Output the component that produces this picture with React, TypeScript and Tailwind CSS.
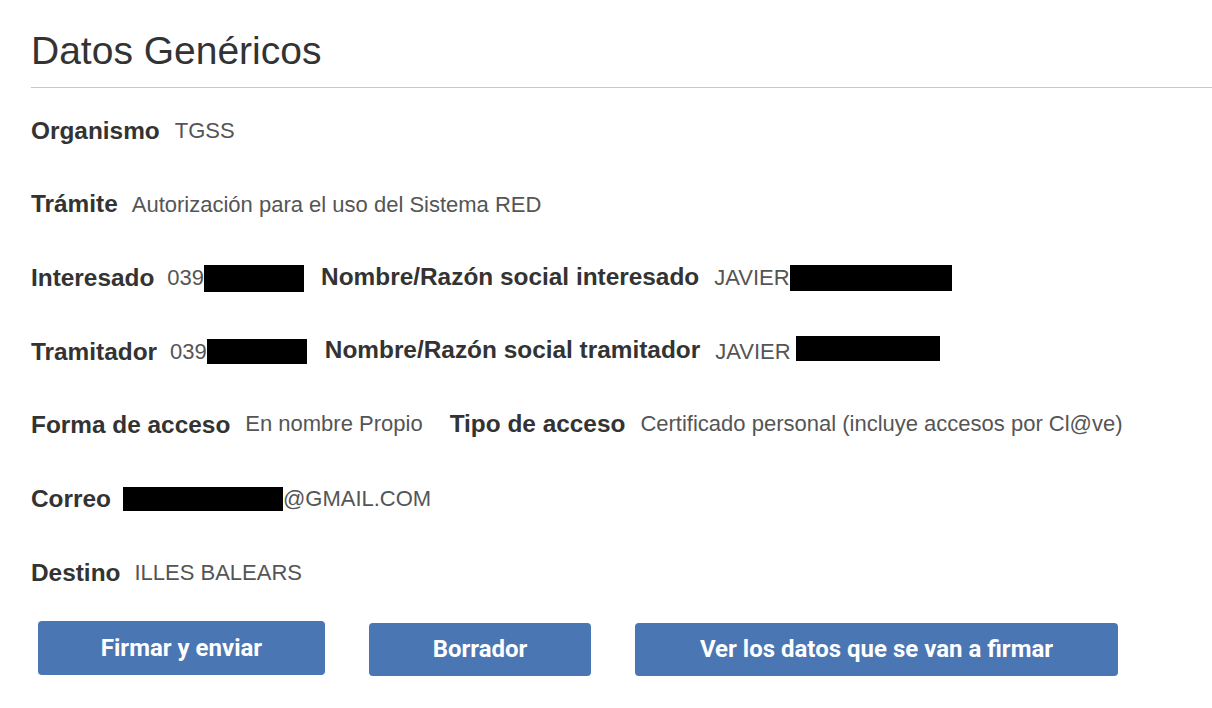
import React from "react";

const Label = ({ children }: { children: React.ReactNode }) => (
  <span className="font-bold text-[24.4px] text-[#333333] leading-none">{children}</span>
);
const Value = ({ children }: { children: React.ReactNode }) => (
  <span className="text-[22px] text-[#555555] leading-none">{children}</span>
);
const Black = ({ w, h }: { w: string; h: string }) => <span className={`inline-block bg-black ${w} ${h}`} />;

export default function App() {
  return (
    <div className="w-[1212px] h-[708px] bg-white overflow-hidden" style={{ fontFamily: '"Liberation Sans", Arial, sans-serif' }}>
      <div className="pl-[31px] pt-[27px]">
        <h1 className="text-[39px] leading-[48px] text-[#333333] font-normal">Datos Genéricos</h1>
        <div className="mt-[12px] h-px bg-[#c8c8c8]" />
        <div className="mt-[6px] flex flex-col">
          <div className="h-[73.7px] flex items-center gap-[15px]">
            <Label>Organismo</Label>
            <Value>TGSS</Value>
          </div>
          <div className="h-[73.7px] flex items-center gap-[14px]">
            <Label>Trámite</Label>
            <Value>Autorización para el uso del Sistema RED</Value>
          </div>
          <div className="h-[73.7px] flex items-center">
            <Label>Interesado</Label>
            <span className="ml-[13px] flex items-center">
              <Value>039</Value>
              <Black w="w-[100px]" h="h-[27px]" />
            </span>
            <span className="ml-[17px]"><Label>Nombre/Razón social interesado</Label></span>
            <span className="ml-[15px] flex items-center">
              <Value>JAVIER</Value>
              <Black w="w-[162px]" h="h-[26px]" />
            </span>
          </div>
          <div className="h-[73.7px] flex items-center">
            <Label>Tramitador</Label>
            <span className="ml-[13px] flex items-center">
              <Value>039</Value>
              <Black w="w-[100px]" h="h-[25px]" />
            </span>
            <span className="ml-[18px]"><Label>Nombre/Razón social tramitador</Label></span>
            <span className="ml-[15px] flex items-center">
              <Value>JAVIER</Value>
              <span className="ml-[5px]"><Black w="w-[144px]" h="h-[25px]" /></span>
            </span>
          </div>
          <div className="h-[73.7px] flex items-center">
            <Label>Forma de acceso</Label>
            <span className="ml-[15px]"><Value>En nombre Propio</Value></span>
            <span className="ml-[27px]"><Label>Tipo de acceso</Label></span>
            <span className="ml-[15px]"><Value>Certificado personal (incluye accesos por Cl@ve)</Value></span>
          </div>
          <div className="h-[73.7px] flex items-center">
            <Label>Correo</Label>
            <span className="ml-[12px] flex items-center">
              <Black w="w-[160px]" h="h-[24px]" />
              <Value>@GMAIL.COM</Value>
            </span>
          </div>
          <div className="h-[73.7px] flex items-center gap-[14px]">
            <Label>Destino</Label>
            <Value>ILLES BALEARS</Value>
          </div>
        </div>
        <div className="mt-[11px] ml-[7px] flex items-start gap-[44px]" style={{ fontFamily: 'Roboto, "Liberation Sans", sans-serif' }}>
          <button className="w-[287px] h-[54px] rounded-[4px] bg-[#4a76b3] text-white text-[24px] font-bold">Firmar y enviar</button>
          <button className="mt-[2px] w-[222px] h-[53px] rounded-[4px] bg-[#4a76b3] text-white text-[24px] font-bold">Borrador</button>
          <button className="mt-[2px] w-[483px] h-[53px] rounded-[4px] bg-[#4a76b3] text-white text-[24px] font-bold">Ver los datos que se van a firmar</button>
        </div>
      </div>
    </div>
  );
}
